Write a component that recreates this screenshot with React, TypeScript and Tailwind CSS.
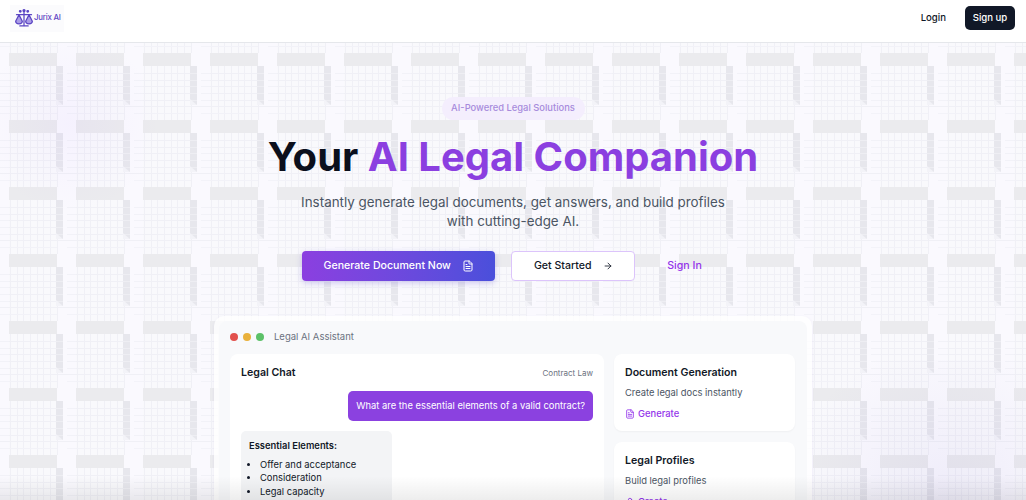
import type { ReactNode } from 'react';
import { ArrowRight, FileText, User } from 'lucide-react';

const font = "font-['Inter','Liberation_Sans',sans-serif]";

const columns = [1, 8, 14, 21, 28, 34, 41, 48];
const rows = [20, 27, 33, 40, 47];

// repeating tile of the page background
const GridPattern = () => (
  <svg className="absolute inset-0 w-full h-full" aria-hidden="true">
    <defs>
      <pattern id="tile" x="9" y="10" width="67" height="67" patternUnits="userSpaceOnUse">
        <rect width="67" height="67" fill="#f9f9fc" />
        <rect x="48" width="19" height="67" fill="#faf9fe" />
        {columns.map(x => (
          <rect key={x} x={x} y="13" width="1" height="54" fill="#f0f0f6" />
        ))}
        {rows.map(y => (
          <g key={y}>
            <rect x="0" y={y} width="48" height="1" fill="#f0f0f6" />
            <rect x="58" y={y} width="9" height="1" fill="#f2f2f8" />
          </g>
        ))}
        <rect x="47" y="13" width="7" height="39" fill="#e7e7ed" />
        {rows.map(y => (
          <rect key={y} x="47" y={y} width="7" height="1" fill="#eeeef3" />
        ))}
        <polygon points="47,46 54,52 47,52" fill="#f3f3f8" />
        <rect x="0" y="53" width="67" height="1" fill="#f0f0f6" />
        <rect x="0" y="60" width="48" height="1" fill="#f2f2f8" />
        <rect x="58" y="60" width="9" height="1" fill="#f3f3f9" />
        <rect x="0" y="0" width="48" height="13" fill="#ebebee" />
      </pattern>
    </defs>
    <rect width="100%" height="100%" fill="url(#tile)" />
  </svg>
);

const Logo = () => (
  <div className="flex items-center w-[54px] h-[27px] bg-[#fbfbfd] pl-[4px] text-[#5b45c4]">
    <svg className="shrink-0" width="20" height="20" viewBox="0 0 24 24" fill="none" stroke="currentColor" strokeWidth="1.5" strokeLinecap="round" strokeLinejoin="round">
      <path d="M12 4v17" />
      <path d="M7 21.5h10" />
      <path d="M3 8h18" />
      <path d="M6 8 2 16a4 3 0 0 0 8 0z" fill="#a99ce6" />
      <path d="M18 8l-4 8a4 3 0 0 0 8 0z" fill="#a99ce6" />
      <circle cx="12" cy="3" r="1.2" fill="currentColor" />
      <circle cx="7.5" cy="4" r="1" fill="currentColor" />
      <circle cx="16.5" cy="4" r="1" fill="currentColor" />
    </svg>
    <span className="text-[7.8px] font-medium tracking-[-0.2px] whitespace-nowrap">Jurix AI</span>
  </div>
);

const FeatureCard = ({ title, text, link, icon }: { title: string; text: string; link: string; icon: ReactNode }) => (
  <div className="bg-white rounded-lg px-[11px] pt-[11px] pb-[9px] shadow-[0_1px_2px_rgba(0,0,0,0.04)]">
    <h3 className="text-[10.6px] leading-[16px] font-semibold text-[#111827]">{title}</h3>
    <p className="mt-[4px] text-[9.4px] leading-[16px] text-[#4b5563]">{text}</p>
    <div className="mt-[5px] flex items-center gap-[3px] text-[9.4px] leading-[16px] font-medium text-[#9333ea]">
      {icon}
      <span>{link}</span>
    </div>
  </div>
);

export default function App() {
  return (
    <div className={`${font} relative w-[1026px] h-[500px] overflow-hidden bg-white`}>
      <header className="h-[43px] bg-white border-b border-[#e5e7eb] flex items-center justify-between pl-[10px] pr-[11px] pb-[6px]">
        <Logo />
        <div className="flex items-center gap-[19px]">
          <button className="text-[9.6px] font-medium text-[#111827]">Login</button>
          <button className="h-[24px] w-[50px] rounded-[5px] bg-[#111827] text-white text-[9.6px] font-medium">Sign up</button>
        </div>
      </header>

      <main className="relative h-[457px]">
        <GridPattern />
        <div className="absolute left-0 top-0 w-[180px] h-[180px] bg-[radial-gradient(circle_at_70px_80px,rgba(168,120,255,0.06),transparent_60%)]" />
        <div className="absolute right-0 bottom-0 w-[260px] h-[140px] bg-[radial-gradient(circle_at_70%_100%,rgba(120,100,200,0.09),transparent_70%)]" />

        <section className="relative flex flex-col items-center pt-[54px]">
          <span className="h-[23px] w-[143px] flex items-center justify-center rounded-full bg-[#f4eefd] text-[9.4px] font-medium text-[#a78bdc] whitespace-nowrap">
            AI-Powered Legal Solutions
          </span>
          <h1 className="mt-[13px] text-[40px] leading-[48px] font-bold text-[#0b0f1c]">
            Your <span className="text-[#8b3fe0]">AI Legal Companion</span>
          </h1>
          <p className="mt-[12px] text-center text-[13.4px] leading-[19px] text-[#4b5563]">
            Instantly generate legal documents, get answers, and build profiles
            <br />
            with cutting-edge AI.
          </p>
          <div className="mt-[20px] flex items-center">
            <button className="h-[30px] w-[193px] rounded-[4px] bg-gradient-to-r from-[#8b3fe0] to-[#4a4fdb] text-white text-[10.6px] font-medium flex items-center justify-center gap-[11px] shadow-[0_2px_6px_rgba(80,60,200,0.25)]">
              Generate Document Now
              <FileText size={12} />
            </button>
            <button className="ml-[16px] h-[30px] w-[124px] rounded-[4px] bg-white border border-[#dcc4fb] text-[#111827] text-[10.6px] font-medium flex items-center justify-center gap-[11px]">
              Get Started
              <ArrowRight size={10} />
            </button>
            <span className="ml-[32px] mr-[22px] text-[10.6px] font-medium text-[#9333ea]">Sign In</span>
          </div>
        </section>

        {/* preview window */}
        <section className="relative mx-auto mt-[35px] w-[598px] rounded-[10px] bg-white/80 p-[5px] shadow-[0_1px_3px_rgba(80,60,160,0.08)]">
          <div className="rounded-[8px] bg-[#f8f9fb] px-[11px]">
            <div className="h-[32px] flex items-center gap-[5px]">
              <i className="w-[8px] h-[8px] rounded-full bg-[#e2504c]" />
              <i className="w-[8px] h-[8px] rounded-full bg-[#e9b13c]" />
              <i className="w-[8px] h-[8px] rounded-full bg-[#5cc168]" />
              <span className="ml-[5px] text-[9.5px] text-[#6b7280]">Legal AI Assistant</span>
            </div>
            <div className="mt-[1px] flex gap-[10px]">
              <div className="w-[374px] bg-white rounded-lg px-[11px] pt-[11px] h-[200px]">
                <div className="flex items-center justify-between h-[16px]">
                  <h3 className="text-[10.6px] font-semibold text-[#111827]">Legal Chat</h3>
                  <span className="text-[8px] text-[#6b7280]">Contract Law</span>
                </div>
                <div className="mt-[10px] flex justify-end">
                  <div className="h-[30px] flex items-center px-[8px] rounded-[5px] bg-[#8b41e0] text-white text-[9.4px]">
                    What are the essential elements of a valid contract?
                  </div>
                </div>
                <div className="mt-[10px] w-[151px] rounded-[5px] bg-[#f3f4f6] pl-[8px] pt-[8px] pb-[8px] text-[#111827]">
                  <h4 className="text-[9.4px] leading-[14px] font-semibold">Essential Elements:</h4>
                  <ul className="mt-[5px] list-disc pl-[11px] text-[9.4px] leading-[13.4px]">
                    <li>Offer and acceptance</li>
                    <li>Consideration</li>
                    <li>Legal capacity</li>
                  </ul>
                </div>
              </div>
              <div className="w-[181px] flex flex-col gap-[11px]">
                <FeatureCard title="Document Generation" text="Create legal docs instantly" link="Generate" icon={<FileText size={10} />} />
                <FeatureCard title="Legal Profiles" text="Build legal profiles" link="Create" icon={<User size={10} />} />
              </div>
            </div>
          </div>
        </section>
        <div className="absolute left-0 right-0 bottom-0 h-[24px] bg-gradient-to-b from-transparent to-[#00000012]" />
      </main>
    </div>
  );
}
